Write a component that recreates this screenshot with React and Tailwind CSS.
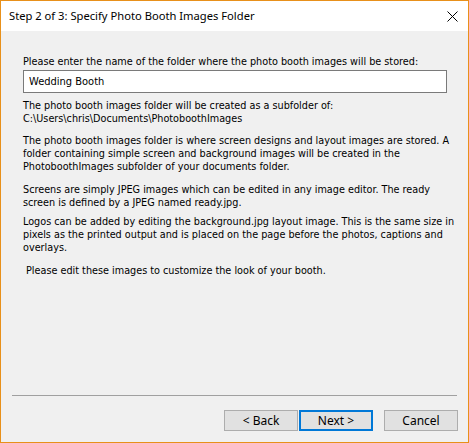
import React, { useState } from "react";

const body = { fontFamily: '"DejaVu Sans", Tahoma, sans-serif', fontStretch: "condensed" };

function Line({ children, className = "" }) {
  return <div className={`h-[13px] leading-[13px] whitespace-nowrap ${className}`}>{children}</div>;
}

export default function App() {
  const [folder, setFolder] = useState("Wedding Booth");

  return (
    <div className="w-[469px] h-[443px] border border-[#e8901a] flex flex-col bg-[#f0f0f0] text-black overflow-hidden">
      <div className="h-[30px] bg-white flex items-center justify-between pl-[8px] pr-[10px] shrink-0">
        <span className="text-[11.2px]" style={{ fontFamily: '"Noto Sans", "Segoe UI", sans-serif' }}>
          Step 2 of 3: Specify Photo Booth Images Folder
        </span>
        <svg width="11" height="11" viewBox="0 0 11 11" className="mt-[1px]">
          <path d="M0.5 0.5L10.5 10.5M10.5 0.5L0.5 10.5" stroke="#000" strokeWidth="1" />
        </svg>
      </div>

      <div className="flex-1 flex flex-col px-[22px] pt-[24px] text-[10.75px]" style={body}>
        <Line>Please enter the name of the folder where the photo booth images will be stored:</Line>
        <input
          value={folder}
          onChange={(e) => setFolder(e.target.value)}
          className="mt-[2px] h-[23px] w-[424px] border border-[#7a7a7a] bg-white px-[5px] text-[11px] outline-none"
          style={body}
        />

        <div className="mt-[6px]">
          <Line>The photo booth images folder will be created as a subfolder of:</Line>
          <Line>C:\Users\chris\Documents\PhotoboothImages</Line>
        </div>

        <div className="mt-[9px]">
          <Line>The photo booth images folder is where screen designs and layout images are stored. A</Line>
          <Line>folder containing simple screen and background images will be created in the</Line>
          <Line>PhotoboothImages subfolder of your documents folder.</Line>
        </div>

        <div className="mt-[10px]">
          <Line>Screens are simply JPEG images which can be edited in any image editor. The ready</Line>
          <Line>screen is defined by a JPEG named ready.jpg.</Line>
        </div>

        <div className="mt-[6px]">
          <Line>Logos can be added by editing the background.jpg layout image. This is the same size in</Line>
          <Line>pixels as the printed output and is placed on the page before the photos, captions and</Line>
          <Line>overlays.</Line>
        </div>

        <Line className="mt-[10px] pl-[3px]">Please edit these images to customize the look of your booth.</Line>
      </div>

      <div className="shrink-0 px-[11px]">
        <div className="h-px bg-[#a0a0a0]" />
      </div>

      <div className="shrink-0 h-[46px] flex items-start justify-end pt-[14px] pr-[10px] text-[12px]" style={{ fontFamily: '"Noto Sans", "Segoe UI", sans-serif' }}>
        <button className="w-[74px] h-[21px] bg-[#e1e1e1] border border-[#adadad] leading-none">&lt; Back</button>
        <button className="ml-[1px] w-[74px] h-[21px] bg-[#e1e1e1] border-2 border-[#0078d7] leading-none">Next &gt;</button>
        <button className="ml-[11px] w-[74px] h-[21px] bg-[#e1e1e1] border border-[#adadad] leading-none">Cancel</button>
      </div>
    </div>
  );
}
